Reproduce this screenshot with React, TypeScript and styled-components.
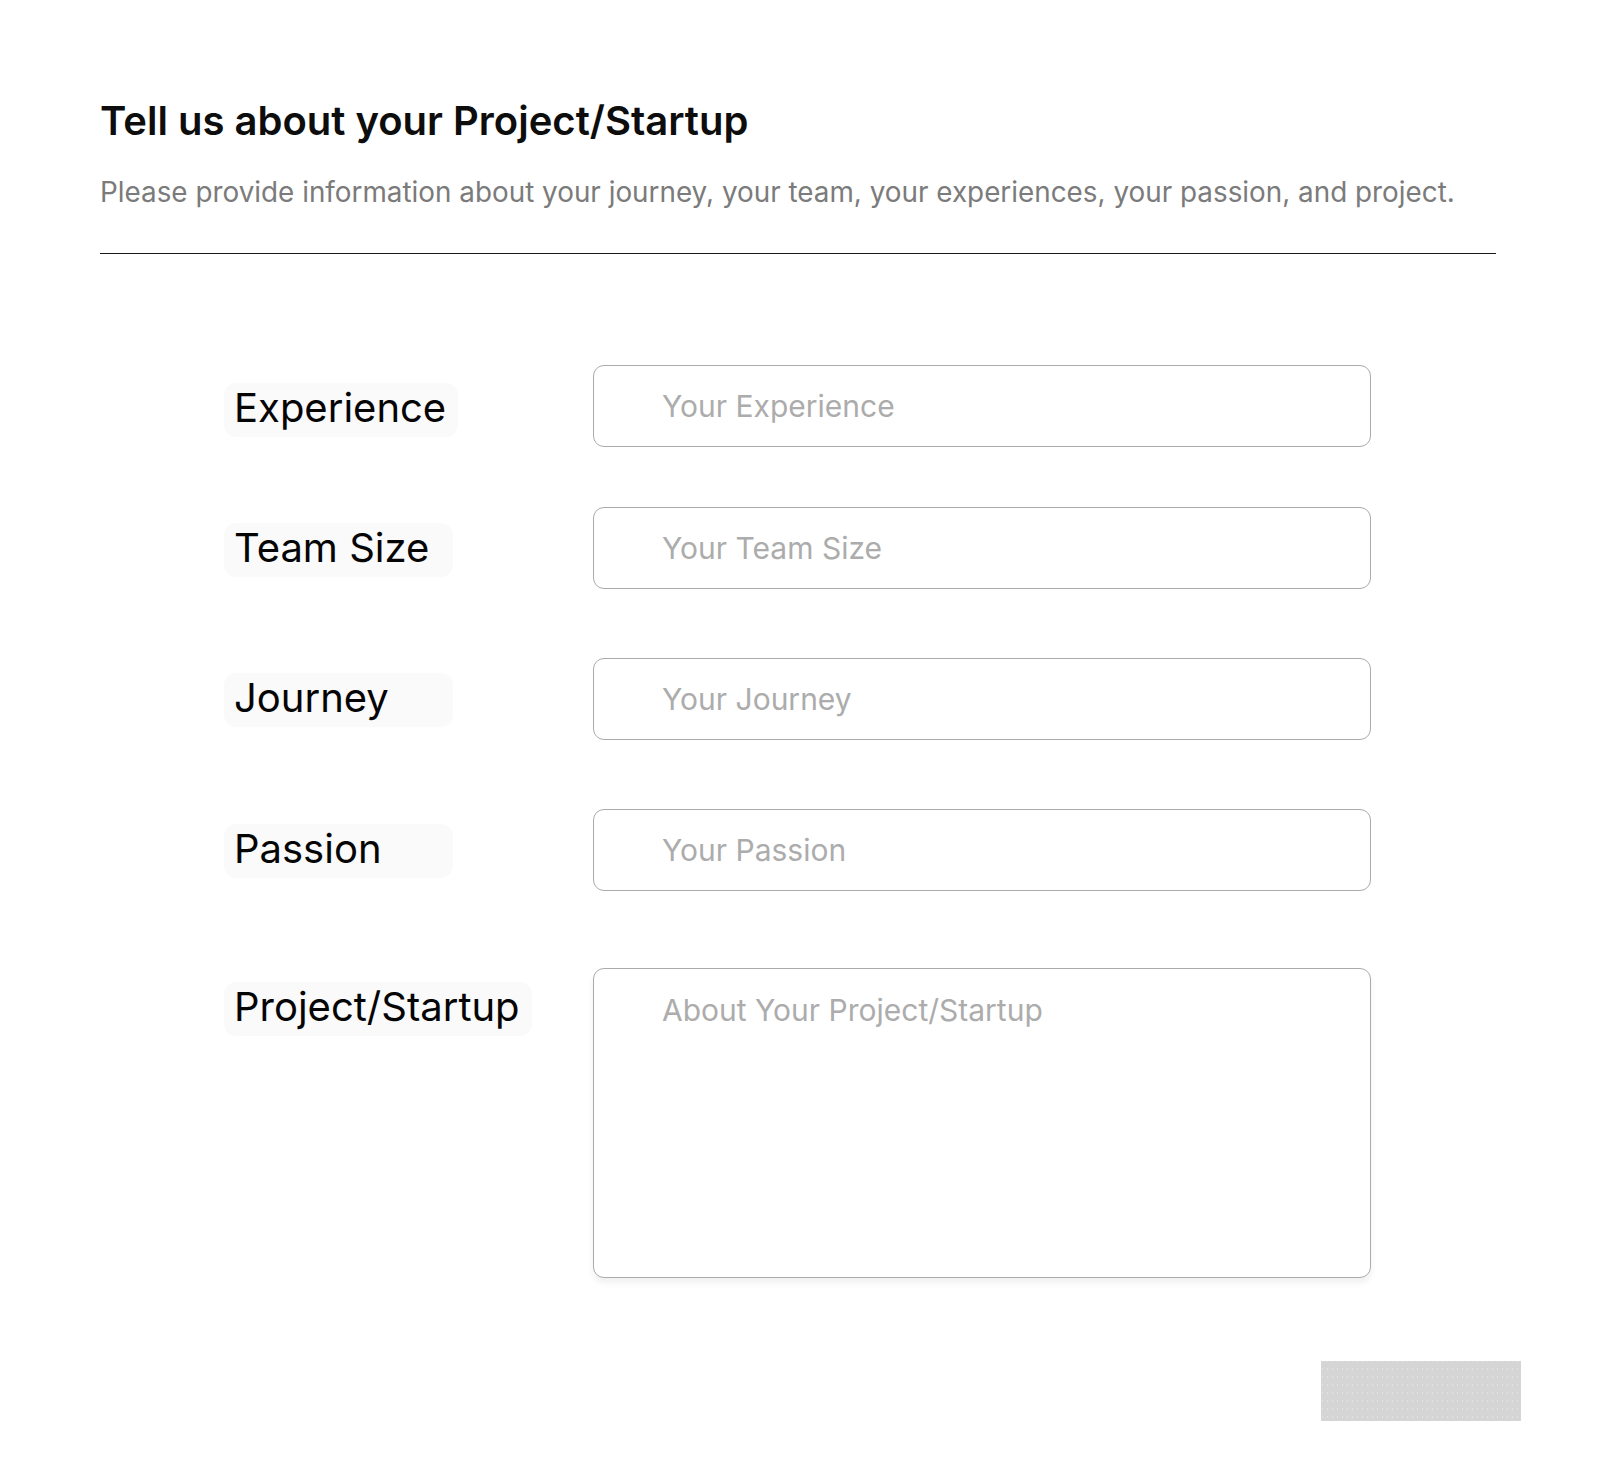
import styled, { createGlobalStyle } from 'styled-components';

const GlobalStyle = createGlobalStyle`
    body {
        margin: 0;
        background: #ffffff;
        font-family: Inter, "Noto Sans", sans-serif;
    }
`

const Page = styled.div`
    width: 1608px;
    min-height: 1482px;
    box-sizing: border-box;
    padding: 96px 112px 0 100px;
`

const Header = styled.div`
    display: flex;
    flex-direction: column;
    border-bottom: 1px solid #1a1a1a;
    padding-bottom: 44px;
`

const Title = styled.h1`
    margin: 0;
    font-size: 40px;
    font-weight: 600;
    color: #0d0d0d;
    line-height: normal;
`

const SubTitle = styled.p`
    margin: 30px 0 0 0;
    font-size: 27.85px;
    font-weight: 400;
    color: #7b7b7b;
    line-height: normal;
`

const Form = styled.form`
    display: flex;
    flex-direction: column;
    padding-left: 124px;
    margin-top: 111px;
`

const Row = styled.div<{ $gap: number }>`
    display: grid;
    grid-template-columns: 369px 778px;
    align-items: start;
    margin-top: ${props => props.$gap}px;
`

const Label = styled.label<{ $offset: number }>`
    justify-self: start;
    min-width: 229px;
    box-sizing: border-box;
    height: 54px;
    padding: 1px 12px 0 10px;
    margin-top: ${props => props.$offset}px;
    background-color: #fafafa;
    border-radius: 12px;
    font-size: 40px;
    line-height: 48px;
    color: #050505;
    white-space: nowrap;
`

const Field = styled.input`
    width: 100%;
    height: 82px;
    box-sizing: border-box;
    border: 1px solid #ababab;
    border-radius: 11px;
    padding: 0 20px 0 68px;
    font-family: Inter, "Noto Sans", sans-serif;
    font-size: 30px;
    color: #222;
    outline: none;
    background: #fff;

    &::placeholder {
        color: #acacac;
    }
`

const Area = styled.textarea`
    width: 100%;
    height: 310px;
    box-sizing: border-box;
    border: 1px solid #ababab;
    border-radius: 11px;
    padding: 23px 20px 0 68px;
    font-family: Inter, "Noto Sans", sans-serif;
    font-size: 30px;
    line-height: normal;
    color: #222;
    outline: none;
    resize: none;
    background: #fff;
    box-shadow: 0 5px 6px rgba(0, 0, 0, 0.06);
    display: block;

    &::placeholder {
        color: #acacac;
    }
`

const Footer = styled.div`
    display: flex;
    justify-content: flex-end;
    margin-top: 83px;
    margin-right: -25px;
`

const NextButton = styled.button`
    width: 200px;
    height: 60px;
    border: none;
    border-radius: 0;
    background-color: #d5d5d5;
    background-image: radial-gradient(circle, #e2e2e2 0.7px, transparent 1px);
    background-size: 5px 8px;
    background-position: 4px 4px;
    cursor: pointer;
`

const fields = [
    { name: 'Experience', placeholder: 'Your Experience', gap: 0, offset: 18 },
    { name: 'Team Size', placeholder: 'Your Team Size', gap: 60, offset: 16 },
    { name: 'Journey', placeholder: 'Your Journey', gap: 69, offset: 15 },
    { name: 'Passion', placeholder: 'Your Passion', gap: 69, offset: 15 },
];

const App = () => {
    return (
        <Page>
            <GlobalStyle />
            <Header>
                <Title>Tell us about your Project/Startup</Title>
                <SubTitle>Please provide information about your journey, your team, your experiences, your passion, and project.</SubTitle>
            </Header>

            <Form onSubmit={(e) => e.preventDefault()}>
                {fields.map((item) => (
                    <Row key={item.name} $gap={item.gap}>
                        <Label $offset={item.offset}>{item.name}</Label>
                        <Field placeholder={item.placeholder} />
                    </Row>
                ))}
                <Row $gap={77}>
                    <Label $offset={14}>Project/Startup</Label>
                    <Area placeholder='About Your Project/Startup' />
                </Row>
                <Footer>
                    <NextButton type='submit' aria-label='Next' />
                </Footer>
            </Form>
        </Page>
    )
};

export default App;
